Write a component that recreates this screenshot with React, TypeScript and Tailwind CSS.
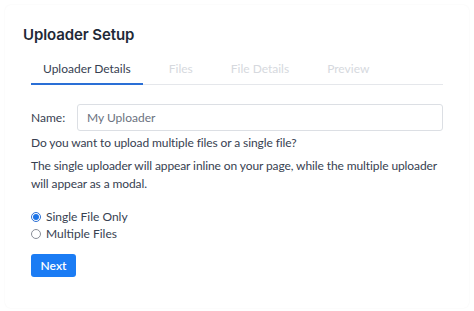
import { useState } from 'react';

export default function App() {
  const [mode, setMode] = useState('single');
  const tabs = ['Uploader Details', 'Files', 'File Details', 'Preview'];

  return (
    <div className="w-[474px] h-[311px] bg-white p-[5px]" style={{ fontFamily: 'Lato, "Noto Sans", sans-serif' }}>
      <div className="h-[303px] rounded-md bg-white shadow-[0_0_2px_rgba(0,0,0,0.05)] pl-[18px] pr-[26px] pt-[20px]">
        <h1
          className="text-[15px] font-semibold text-[#1f2937] leading-[20px] tracking-[-0.1px]"
          style={{ fontFamily: 'Inter, sans-serif' }}
        >
          Uploader Setup
        </h1>

        {/* Tabs */}
        <div className="mt-[16px] ml-[8px] flex gap-[14px] border-b border-[#e5e7eb]">
          {tabs.map((tab, i) => (
            <div
              key={tab}
              className={
                i === 0
                  ? 'px-3 pb-[6px] text-[12px] leading-[16px] text-[#374151] border-b-2 border-[#2a6fd6] -mb-px'
                  : 'px-3 pb-[6px] text-[12px] leading-[16px] text-[#d6d9de]'
              }
            >
              {tab}
            </div>
          ))}
        </div>

        {/* Name */}
        <div className="mt-[19px] ml-[8px] flex items-center">
          <label className="w-[46px] text-[12px] text-[#374151]">Name:</label>
          <input
            className="h-[27px] flex-1 rounded-[3px] border border-[#dcdfe4] px-[9px] text-[12px] text-[#374151] placeholder:text-[#6b7280] outline-none"
            placeholder="My Uploader"
          />
        </div>

        <div className="ml-[8px] -mr-[14px] mt-[3px] text-[12px] leading-[18px] tracking-[-0.1px] text-[#374151]">
          <p>Do you want to upload multiple files or a single file?</p>
          <p className="mt-[5px]">
            The single uploader will appear inline on your page, while the multiple uploader will appear as a modal.
          </p>
        </div>

        {/* Radios */}
        <div className="ml-[8px] mt-[16px] flex flex-col gap-[1px]">
          {[
            { id: 'single', label: 'Single File Only' },
            { id: 'multiple', label: 'Multiple Files' },
          ].map((r) => (
            <label key={r.id} className="flex items-center gap-[5px] text-[12px] leading-[16px] text-[#374151]">
              <span
                onClick={() => setMode(r.id)}
                className={
                  mode === r.id
                    ? 'w-[10px] h-[10px] rounded-full border border-[#2a6fd6] bg-white flex items-center justify-center'
                    : 'w-[10px] h-[10px] rounded-full border border-[#8a8f98] bg-white'
                }
              >
                {mode === r.id && <span className="w-[6px] h-[6px] rounded-full bg-[#1a73e8]" />}
              </span>
              {r.label}
            </label>
          ))}
        </div>

        <button className="ml-[8px] mt-[12px] h-[23px] w-[45px] rounded-[3px] bg-[#1b7cf4] text-[12px] font-semibold text-white">
          Next
        </button>
      </div>
    </div>
  );
}
